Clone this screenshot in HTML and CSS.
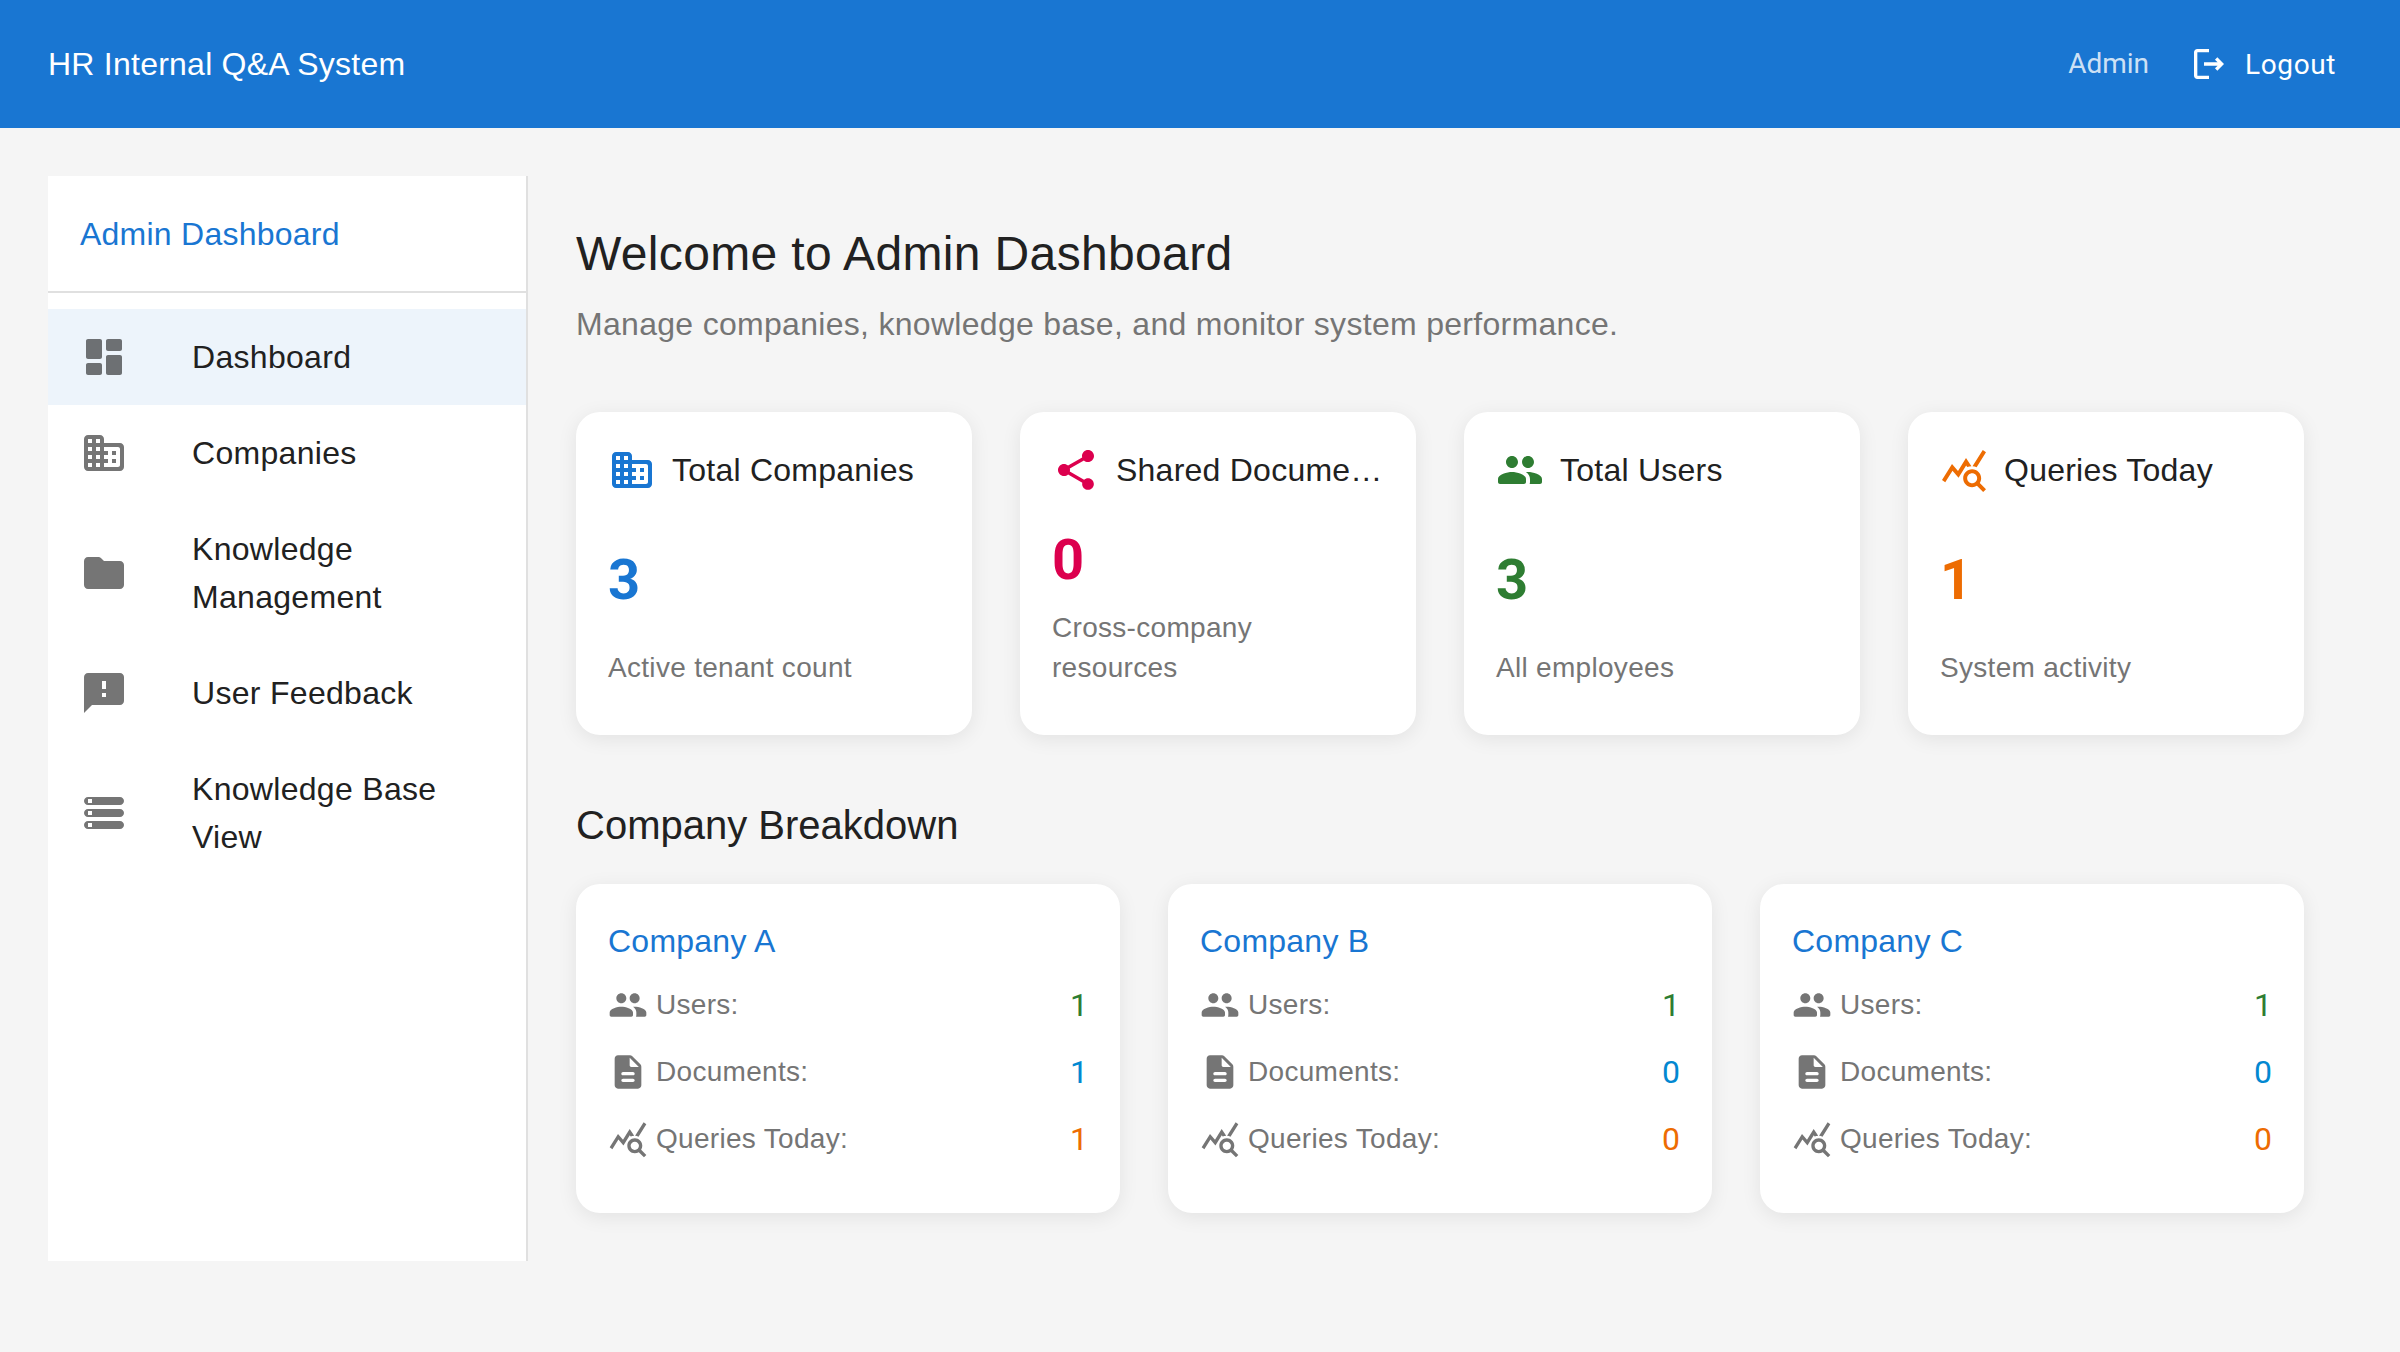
FILE: index.html
```html
<!DOCTYPE html>
<html>
  <head>
    <meta charset="UTF-8">
    <title>HR Internal Q&amp;A System</title>
    <link rel="stylesheet" href="styles.css">
  </head>
  <body>
    <svg class="icon-defs" aria-hidden="true">
      <symbol id="i-dashboard" viewBox="0 0 24 24"><path d="M4 13h6c.55 0 1-.45 1-1V4c0-.55-.45-1-1-1H4c-.55 0-1 .45-1 1v8c0 .55.45 1 1 1zm0 8h6c.55 0 1-.45 1-1v-4c0-.55-.45-1-1-1H4c-.55 0-1 .45-1 1v4c0 .55.45 1 1 1zm10 0h6c.55 0 1-.45 1-1v-8c0-.55-.45-1-1-1h-6c-.55 0-1 .45-1 1v8c0 .55.45 1 1 1zM13 4v4c0 .55.45 1 1 1h6c.55 0 1-.45 1-1V4c0-.55-.45-1-1-1h-6c-.55 0-1 .45-1 1z"/></symbol>
      <symbol id="i-business" viewBox="0 0 24 24"><path d="M12 7V5c0-1.1-.9-2-2-2H4c-1.1 0-2 .9-2 2v14c0 1.1.9 2 2 2h16c1.1 0 2-.9 2-2V9c0-1.1-.9-2-2-2h-8zM6 19H4v-2h2v2zm0-4H4v-2h2v2zm0-4H4V9h2v2zm0-4H4V5h2v2zm4 12H8v-2h2v2zm0-4H8v-2h2v2zm0-4H8V9h2v2zm0-4H8V5h2v2zm9 12h-7v-2h2v-2h-2v-2h2v-2h-2V9h7c.55 0 1 .45 1 1v8c0 .55-.45 1-1 1zm-1-8h-2v2h2v-2zm0 4h-2v2h2v-2z"/></symbol>
      <symbol id="i-folder" viewBox="0 0 24 24"><path d="M10.59 4.59C10.21 4.21 9.7 4 9.17 4H4c-1.1 0-1.99.9-1.99 2L2 18c0 1.1.9 2 2 2h16c1.1 0 2-.9 2-2V8c0-1.1-.9-2-2-2h-8l-1.41-1.41z"/></symbol>
      <symbol id="i-feedback" viewBox="0 0 24 24"><path d="M20 2H4c-1.1 0-1.99.9-1.99 2L2 22l4-4h14c1.1 0 2-.9 2-2V4c0-1.1-.9-2-2-2zm-7 12h-2v-2h2v2zm0-4h-2V6h2v4z"/></symbol>
      <symbol id="i-storage" viewBox="0 0 24 24"><path fill-rule="evenodd" d="M4 4h16c1.1 0 2 .9 2 2s-.9 2-2 2H4c-1.1 0-2-.9-2-2s.9-2 2-2zm0 1v2h2V5H4zm0 5h16c1.1 0 2 .9 2 2s-.9 2-2 2H4c-1.1 0-2-.9-2-2s.9-2 2-2zm0 1v2h2v-2H4zm0 5h16c1.1 0 2 .9 2 2s-.9 2-2 2H4c-1.1 0-2-.9-2-2s.9-2 2-2zm0 1v2h2v-2H4z"/></symbol>
      <symbol id="i-share" viewBox="0 0 24 24"><path d="M18 16.08c-.76 0-1.44.3-1.96.77L8.91 12.7c.05-.23.09-.46.09-.7s-.04-.47-.09-.7l7.05-4.11c.54.5 1.25.81 2.04.81 1.66 0 3-1.34 3-3s-1.34-3-3-3-3 1.34-3 3c0 .24.04.47.09.7L8.04 9.81C7.5 9.31 6.79 9 6 9c-1.66 0-3 1.34-3 3s1.34 3 3 3c.79 0 1.5-.31 2.04-.81l7.12 4.16c-.05.21-.08.43-.08.65 0 1.61 1.31 2.92 2.92 2.92 1.61 0 2.92-1.31 2.92-2.92s-1.31-2.92-2.92-2.92z"/></symbol>
      <symbol id="i-people" viewBox="0 0 24 24"><path d="M16 11c1.66 0 2.99-1.34 2.99-3S17.66 5 16 5c-1.66 0-3 1.34-3 3s1.34 3 3 3zm-8 0c1.66 0 2.99-1.34 2.99-3S9.66 5 8 5C6.34 5 5 6.34 5 8s1.34 3 3 3zm0 2c-2.33 0-7 1.17-7 3.5V18c0 .55.45 1 1 1h12c.55 0 1-.45 1-1v-1.5c0-2.33-4.67-3.5-7-3.5zm8 0c-.29 0-.62.02-.97.05.02.01.03.03.04.04 1.14.83 1.93 1.94 1.93 3.41V18c0 .35-.07.69-.18 1H22c.55 0 1-.45 1-1v-1.5c0-2.33-4.67-3.5-7-3.5z"/></symbol>
      <symbol id="i-query" viewBox="0 0 24 24"><path d="M19.88 18.47c.44-.7.7-1.51.7-2.39 0-2.49-2.01-4.5-4.5-4.5s-4.5 2.01-4.5 4.5 2.01 4.5 4.49 4.5c.88 0 1.7-.26 2.39-.7L21.58 23 23 21.58l-3.12-3.11zm-3.8.11c-1.38 0-2.5-1.12-2.5-2.5s1.12-2.5 2.5-2.5 2.5 1.12 2.5 2.5-1.12 2.5-2.5 2.5zm-.36-8.5c-.74.02-1.45.18-2.1.45l-.55-.83-3.8 6.18-3.01-3.52-3.63 5.81L1 17l5-8 3 3.5L13 6l2.72 4.08zm2.59.5c-.64-.28-1.33-.45-2.05-.49L21.38 2 23 3.18l-4.69 7.4z"/></symbol>
      <symbol id="i-doc" viewBox="0 0 24 24"><path d="M14.59 2.59c-.38-.38-.89-.59-1.42-.59H6c-1.1 0-2 .9-2 2v16c0 1.1.89 2 1.99 2H18c1.1 0 2-.9 2-2V8.83c0-.53-.21-1.04-.59-1.41l-4.82-4.83zM15 18H9c-.55 0-1-.45-1-1s.45-1 1-1h6c.55 0 1 .45 1 1s-.45 1-1 1zm0-4H9c-.55 0-1-.45-1-1s.45-1 1-1h6c.55 0 1 .45 1 1s-.45 1-1 1zm-2-6V3.5L18.5 9H14c-.55 0-1-.45-1-1z"/></symbol>
      <symbol id="i-logout" viewBox="0 0 24 24"><path d="M17 8l-1.41 1.41L17.17 11H9v2h8.17l-1.58 1.58L17 16l4-4-4-4zM5 5h7V3H5c-1.1 0-2 .9-2 2v14c0 1.1.9 2 2 2h7v-2H5V5z"/></symbol>
    </svg>

    <header class="topbar">
      <div class="topbar-title">HR Internal Q&amp;A System</div>
      <div class="topbar-user">Admin</div>
      <a class="logout-btn" href="#">
        <svg class="icon-40"><use href="#i-logout"/></svg>
        Logout
      </a>
    </header>

    <div class="page">
      <aside class="sidebar">
        <div class="sidebar-title">Admin Dashboard</div>
        <ul class="nav-list">
          <li class="nav-item active">
            <svg class="icon-48"><use href="#i-dashboard"/></svg>
            <span>Dashboard</span>
          </li>
          <li class="nav-item">
            <svg class="icon-48"><use href="#i-business"/></svg>
            <span>Companies</span>
          </li>
          <li class="nav-item">
            <svg class="icon-48"><use href="#i-folder"/></svg>
            <span>Knowledge Management</span>
          </li>
          <li class="nav-item">
            <svg class="icon-48"><use href="#i-feedback"/></svg>
            <span>User Feedback</span>
          </li>
          <li class="nav-item">
            <svg class="icon-48"><use href="#i-storage"/></svg>
            <span>Knowledge Base View</span>
          </li>
        </ul>
      </aside>

      <main class="main">
        <h1 class="page-title">Welcome to Admin Dashboard</h1>
        <p class="page-sub">Manage companies, knowledge base, and monitor system performance.</p>

        <div class="stat-grid">
          <div class="card stat-card blue">
            <div class="stat-head">
              <svg class="icon-48"><use href="#i-business"/></svg>
              <div class="stat-title">Total Companies</div>
            </div>
            <div class="stat-value">3</div>
            <div class="stat-desc">Active tenant count</div>
          </div>
          <div class="card stat-card pink">
            <div class="stat-head">
              <svg class="icon-48"><use href="#i-share"/></svg>
              <div class="stat-title">Shared Documents</div>
            </div>
            <div class="stat-value">0</div>
            <div class="stat-desc">Cross-company resources</div>
          </div>
          <div class="card stat-card green">
            <div class="stat-head">
              <svg class="icon-48"><use href="#i-people"/></svg>
              <div class="stat-title">Total Users</div>
            </div>
            <div class="stat-value">3</div>
            <div class="stat-desc">All employees</div>
          </div>
          <div class="card stat-card orange">
            <div class="stat-head">
              <svg class="icon-48"><use href="#i-query"/></svg>
              <div class="stat-title">Queries Today</div>
            </div>
            <div class="stat-value">1</div>
            <div class="stat-desc">System activity</div>
          </div>
        </div>

        <h2 class="section-title">Company Breakdown</h2>

        <div class="company-grid">
          <div class="card company-card">
            <div class="company-name">Company A</div>
            <div class="company-row">
              <svg class="icon-40"><use href="#i-people"/></svg>
              <span class="row-label">Users:</span>
              <span class="row-value green">1</span>
            </div>
            <div class="company-row">
              <svg class="icon-40"><use href="#i-doc"/></svg>
              <span class="row-label">Documents:</span>
              <span class="row-value sky">1</span>
            </div>
            <div class="company-row">
              <svg class="icon-40"><use href="#i-query"/></svg>
              <span class="row-label">Queries Today:</span>
              <span class="row-value orange">1</span>
            </div>
          </div>
          <div class="card company-card">
            <div class="company-name">Company B</div>
            <div class="company-row">
              <svg class="icon-40"><use href="#i-people"/></svg>
              <span class="row-label">Users:</span>
              <span class="row-value green">1</span>
            </div>
            <div class="company-row">
              <svg class="icon-40"><use href="#i-doc"/></svg>
              <span class="row-label">Documents:</span>
              <span class="row-value sky">0</span>
            </div>
            <div class="company-row">
              <svg class="icon-40"><use href="#i-query"/></svg>
              <span class="row-label">Queries Today:</span>
              <span class="row-value orange">0</span>
            </div>
          </div>
          <div class="card company-card">
            <div class="company-name">Company C</div>
            <div class="company-row">
              <svg class="icon-40"><use href="#i-people"/></svg>
              <span class="row-label">Users:</span>
              <span class="row-value green">1</span>
            </div>
            <div class="company-row">
              <svg class="icon-40"><use href="#i-doc"/></svg>
              <span class="row-label">Documents:</span>
              <span class="row-value sky">0</span>
            </div>
            <div class="company-row">
              <svg class="icon-40"><use href="#i-query"/></svg>
              <span class="row-label">Queries Today:</span>
              <span class="row-value orange">0</span>
            </div>
          </div>
        </div>
      </main>
    </div>
  </body>
</html>
```

FILE: styles.css
```css
* {
  box-sizing: border-box;
}

body {
  margin: 0;
  min-height: 1352px;
  font-family: "Liberation Sans", Arial, sans-serif;
  color: #212121;
  background-color: #f5f5f5;
}

.icon-defs {
  display: none;
}

.icon-48,
.icon-40 {
  flex-shrink: 0;
  fill: currentColor;
}

.icon-48 {
  width: 48px;
  height: 48px;
}

.icon-40 {
  width: 40px;
  height: 40px;
}

/* top bar */
.topbar {
  display: flex;
  align-items: center;
  height: 128px;
  padding: 0 48px;
  background-color: #1976d2;
  color: #fff;
}

.topbar-title {
  flex: 1;
  font-size: 32px;
  letter-spacing: 0.24px;
}

.topbar-user {
  margin: 0 32px 2px 0;
  font-family: Roboto, sans-serif;
  font-size: 28px;
  color: rgba(255, 255, 255, 0.8);
}

.logout-btn {
  display: flex;
  align-items: center;
  gap: 16px;
  padding: 12px 16px 12px 8px;
  font-family: Roboto, sans-serif;
  font-size: 28px;
  letter-spacing: 0.6px;
  color: #fff;
  text-decoration: none;
}

/* layout */
.page {
  display: flex;
  padding: 48px;
}

.sidebar {
  flex: 0 0 480px;
  background-color: #fff;
  border-right: 2px solid #e0e0e0;
}

.sidebar-title {
  padding: 33px 32px 31px;
  font-size: 32px;
  line-height: 1.6;
  letter-spacing: 0.24px;
  color: #1976d2;
  border-bottom: 2px solid #e0e0e0;
}

.nav-list {
  list-style: none;
  margin: 0;
  padding: 16px 0;
}

.nav-item {
  display: flex;
  align-items: center;
  padding: 24px 32px;
  font-size: 32px;
  line-height: 48px;
  letter-spacing: 0.3px;
}

.nav-item svg {
  margin-right: 64px;
  color: rgba(0, 0, 0, 0.54);
}

.nav-item.active {
  background-color: rgba(25, 118, 210, 0.08);
}

.main {
  flex: 1;
  min-width: 0;
  padding: 48px;
}

.page-title {
  margin: 0 0 16.5px;
  font-size: 48px;
  font-weight: 400;
  line-height: 1.235;
  letter-spacing: 0.35px;
}

.page-sub {
  margin: 0 0 64px;
  font-size: 32px;
  line-height: 48px;
  letter-spacing: 0.3px;
  color: #757575;
}

.section-title {
  margin: 64px 0 32px;
  font-size: 40px;
  font-weight: 400;
  line-height: 1.334;
}

/* cards */
.card {
  min-width: 0;
  background-color: #fff;
  border-radius: 24px;
  box-shadow: 0 4px 20px rgba(0, 0, 0, 0.08);
}

.stat-grid {
  display: grid;
  grid-template-columns: repeat(4, minmax(0, 1fr));
  gap: 48px;
}

.stat-card {
  display: flex;
  flex-direction: column;
  padding: 33px 32px 47px;
}

.stat-head {
  display: flex;
  align-items: center;
  gap: 16px;
  margin-bottom: 30px;
}

.stat-title {
  min-width: 0;
  font-size: 32px;
  line-height: 1.6;
  letter-spacing: 0.24px;
  color: #212121;
  white-space: nowrap;
  overflow: hidden;
  text-overflow: ellipsis;
}

.stat-value {
  flex: 1;
  display: flex;
  align-items: center;
  margin-bottom: 13px;
  font-family: Roboto, sans-serif;
  font-size: 56px;
  font-weight: 700;
  line-height: 1.235;
}

.stat-desc {
  font-size: 28px;
  line-height: 40px;
  letter-spacing: 0.3px;
  color: #757575;
}

.blue {
  color: #1976d2;
}

.pink {
  color: #dc004e;
}

.green {
  color: #2e7d32;
}

.orange {
  color: #ed6c02;
}

.sky {
  color: #0288d1;
}

.company-grid {
  display: grid;
  grid-template-columns: repeat(3, minmax(0, 1fr));
  gap: 48px;
}

.company-card {
  display: flex;
  flex-direction: column;
  gap: 16px;
  padding: 32px 32px 48px;
}

.company-name {
  margin-bottom: -4px;
  font-size: 32px;
  line-height: 1.6;
  letter-spacing: 0.24px;
  color: #1976d2;
}

.company-row {
  display: flex;
  align-items: center;
  gap: 8px;
  height: 51px;
}

.company-row svg {
  color: #757575;
}

.row-label {
  flex: 1;
  font-size: 28px;
  letter-spacing: 0.3px;
  color: #757575;
}

.row-value {
  font-family: Roboto, sans-serif;
  font-size: 32px;
}
```
